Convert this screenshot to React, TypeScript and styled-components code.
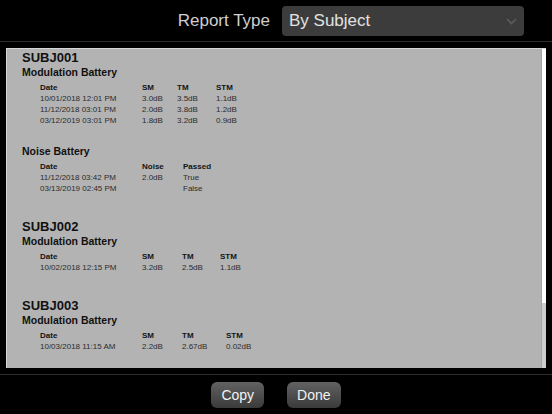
import React from 'react';
import styled, { createGlobalStyle } from 'styled-components';

const GlobalStyle = createGlobalStyle`
	html, body {
		margin: 0;
		padding: 0;
		background: #000;
	}
	body {
		font-family: 'Liberation Sans', Arial, sans-serif;
	}
`;

const Screen = styled.div`
	width: 552px;
	height: 414px;
	display: flex;
	flex-direction: column;
	background: #000;
	overflow: hidden;
`;

const Header = styled.header`
	height: 42px;
	box-sizing: border-box;
	padding: 1px 28px 0 0;
	display: flex;
	align-items: center;
	justify-content: flex-end;
	gap: 12px;
	border-bottom: 1px solid #2e2e2e;
`;

const Label = styled.span`
	font-size: 17px;
	color: #cfcfcf;
`;

const Select = styled.div`
	width: 242px;
	height: 30px;
	box-sizing: border-box;
	padding: 0 7px;
	display: flex;
	align-items: center;
	justify-content: space-between;
	background: #3c3c3c;
	border-radius: 4px;
	font-size: 17px;
	color: #e2e2e2;
`;

const Body = styled.main`
	flex: 1;
	min-height: 0;
	padding: 6px;
	display: flex;
`;

const Panel = styled.section`
	flex: 1;
	display: flex;
	background: #b3b3b3;
	border-top: 1px solid #d6d6d6;
	border-left: 1px solid #d6d6d6;
	overflow: hidden;
`;

const Content = styled.div`
	flex: 1;
	padding: 1px 0 0 15px;
	color: #111;
`;

const Scrollbar = styled.div`
	width: 4px;
	border-left: 1px solid #a4a4a4;
	background: #cdcdcd;
	display: flex;
	flex-direction: column;
`;

const Thumb = styled.div<{ $size: number }>`
	height: ${(p) => p.$size}px;
	background: #fff;
`;

const Subject = styled.div<{ $first?: boolean }>`
	margin-top: ${(p) => (p.$first ? 0 : 25)}px;
`;

const SubjectTitle = styled.h2`
	margin: 0;
	font-size: 13px;
	line-height: 15px;
	font-weight: 700;
`;

const Battery = styled.div<{ $spaced?: boolean }>`
	margin-top: ${(p) => (p.$spaced ? 18 : 0)}px;
`;

const BatteryTitle = styled.h3`
	margin: 0 0 3px;
	font-size: 10.5px;
	line-height: 14px;
	font-weight: 700;
`;

const Table = styled.div<{ $cols: string }>`
	margin-left: 18px;
	display: grid;
	grid-template-columns: ${(p) => p.$cols};
	font-size: 8px;
	line-height: 11px;
`;

const HeadCell = styled.span`
	font-weight: 700;
	color: #141414;
`;

const Cell = styled.span`
	color: #2c2c2c;
	white-space: nowrap;
`;

const Footer = styled.footer`
	height: 40px;
	box-sizing: border-box;
	padding-top: 7px;
	border-top: 1px solid #2e2e2e;
	display: flex;
	justify-content: center;
	align-items: flex-start;
	gap: 23px;
`;

const Button = styled.button`
	height: 26px;
	min-width: 52px;
	padding: 0 10px;
	border: none;
	border-radius: 6px;
	background: linear-gradient(#626262, #3a3a3a);
	color: #f2f2f2;
	font-family: inherit;
	font-size: 14px;
`;

type BatteryData = {
	name: string;
	cols: string;
	head: string[];
	rows: string[][];
};

type SubjectData = {
	id: string;
	batteries: BatteryData[];
};

const subjects: SubjectData[] = [
	{
		id: 'SUBJ001',
		batteries: [
			{
				name: 'Modulation Battery',
				cols: '102px 35px 39px auto',
				head: ['Date', 'SM', 'TM', 'STM'],
				rows: [
					['10/01/2018 12:01 PM', '3.0dB', '3.5dB', '1.1dB'],
					['11/12/2018 03:01 PM', '2.0dB', '3.8dB', '1.2dB'],
					['03/12/2019 03:01 PM', '1.8dB', '3.2dB', '0.9dB'],
				],
			},
			{
				name: 'Noise Battery',
				cols: '102px 41px auto',
				head: ['Date', 'Noise', 'Passed'],
				rows: [
					['11/12/2018 03:42 PM', '2.0dB', 'True'],
					['03/13/2019 02:45 PM', '', 'False'],
				],
			},
		],
	},
	{
		id: 'SUBJ002',
		batteries: [
			{
				name: 'Modulation Battery',
				cols: '102px 40px 38px auto',
				head: ['Date', 'SM', 'TM', 'STM'],
				rows: [['10/02/2018 12:15 PM', '3.2dB', '2.5dB', '1.1dB']],
			},
		],
	},
	{
		id: 'SUBJ003',
		batteries: [
			{
				name: 'Modulation Battery',
				cols: '102px 40px 44px auto',
				head: ['Date', 'SM', 'TM', 'STM'],
				rows: [['10/03/2018 11:15 AM', '2.2dB', '2.67dB', '0.02dB']],
			},
		],
	},
];

const Chevron = () => (
	<svg width='11' height='7' viewBox='0 0 11 7'>
		<polyline points='1,1 5.5,5.5 10,1' fill='none' stroke='#5c5c5c' strokeWidth='1.6' />
	</svg>
);

export default function App() {
	return (
		<Screen>
			<GlobalStyle />
			<Header>
				<Label>Report Type</Label>
				<Select>
					By Subject
					<Chevron />
				</Select>
			</Header>
			<Body>
				<Panel>
					<Content>
						{subjects.map((s, i) => (
							<Subject key={s.id} $first={i === 0}>
								<SubjectTitle>{s.id}</SubjectTitle>
								{s.batteries.map((b, j) => (
									<Battery key={b.name} $spaced={j > 0}>
										<BatteryTitle>{b.name}</BatteryTitle>
										<Table $cols={b.cols}>
											{b.head.map((h) => (
												<HeadCell key={h}>{h}</HeadCell>
											))}
											{b.rows.map((r, k) =>
												r.map((c, n) => <Cell key={`${k}-${n}`}>{c}</Cell>)
											)}
										</Table>
									</Battery>
								))}
							</Subject>
						))}
					</Content>
					<Scrollbar>
						<Thumb $size={254} />
					</Scrollbar>
				</Panel>
			</Body>
			<Footer>
				<Button>Copy</Button>
				<Button>Done</Button>
			</Footer>
		</Screen>
	);
}
